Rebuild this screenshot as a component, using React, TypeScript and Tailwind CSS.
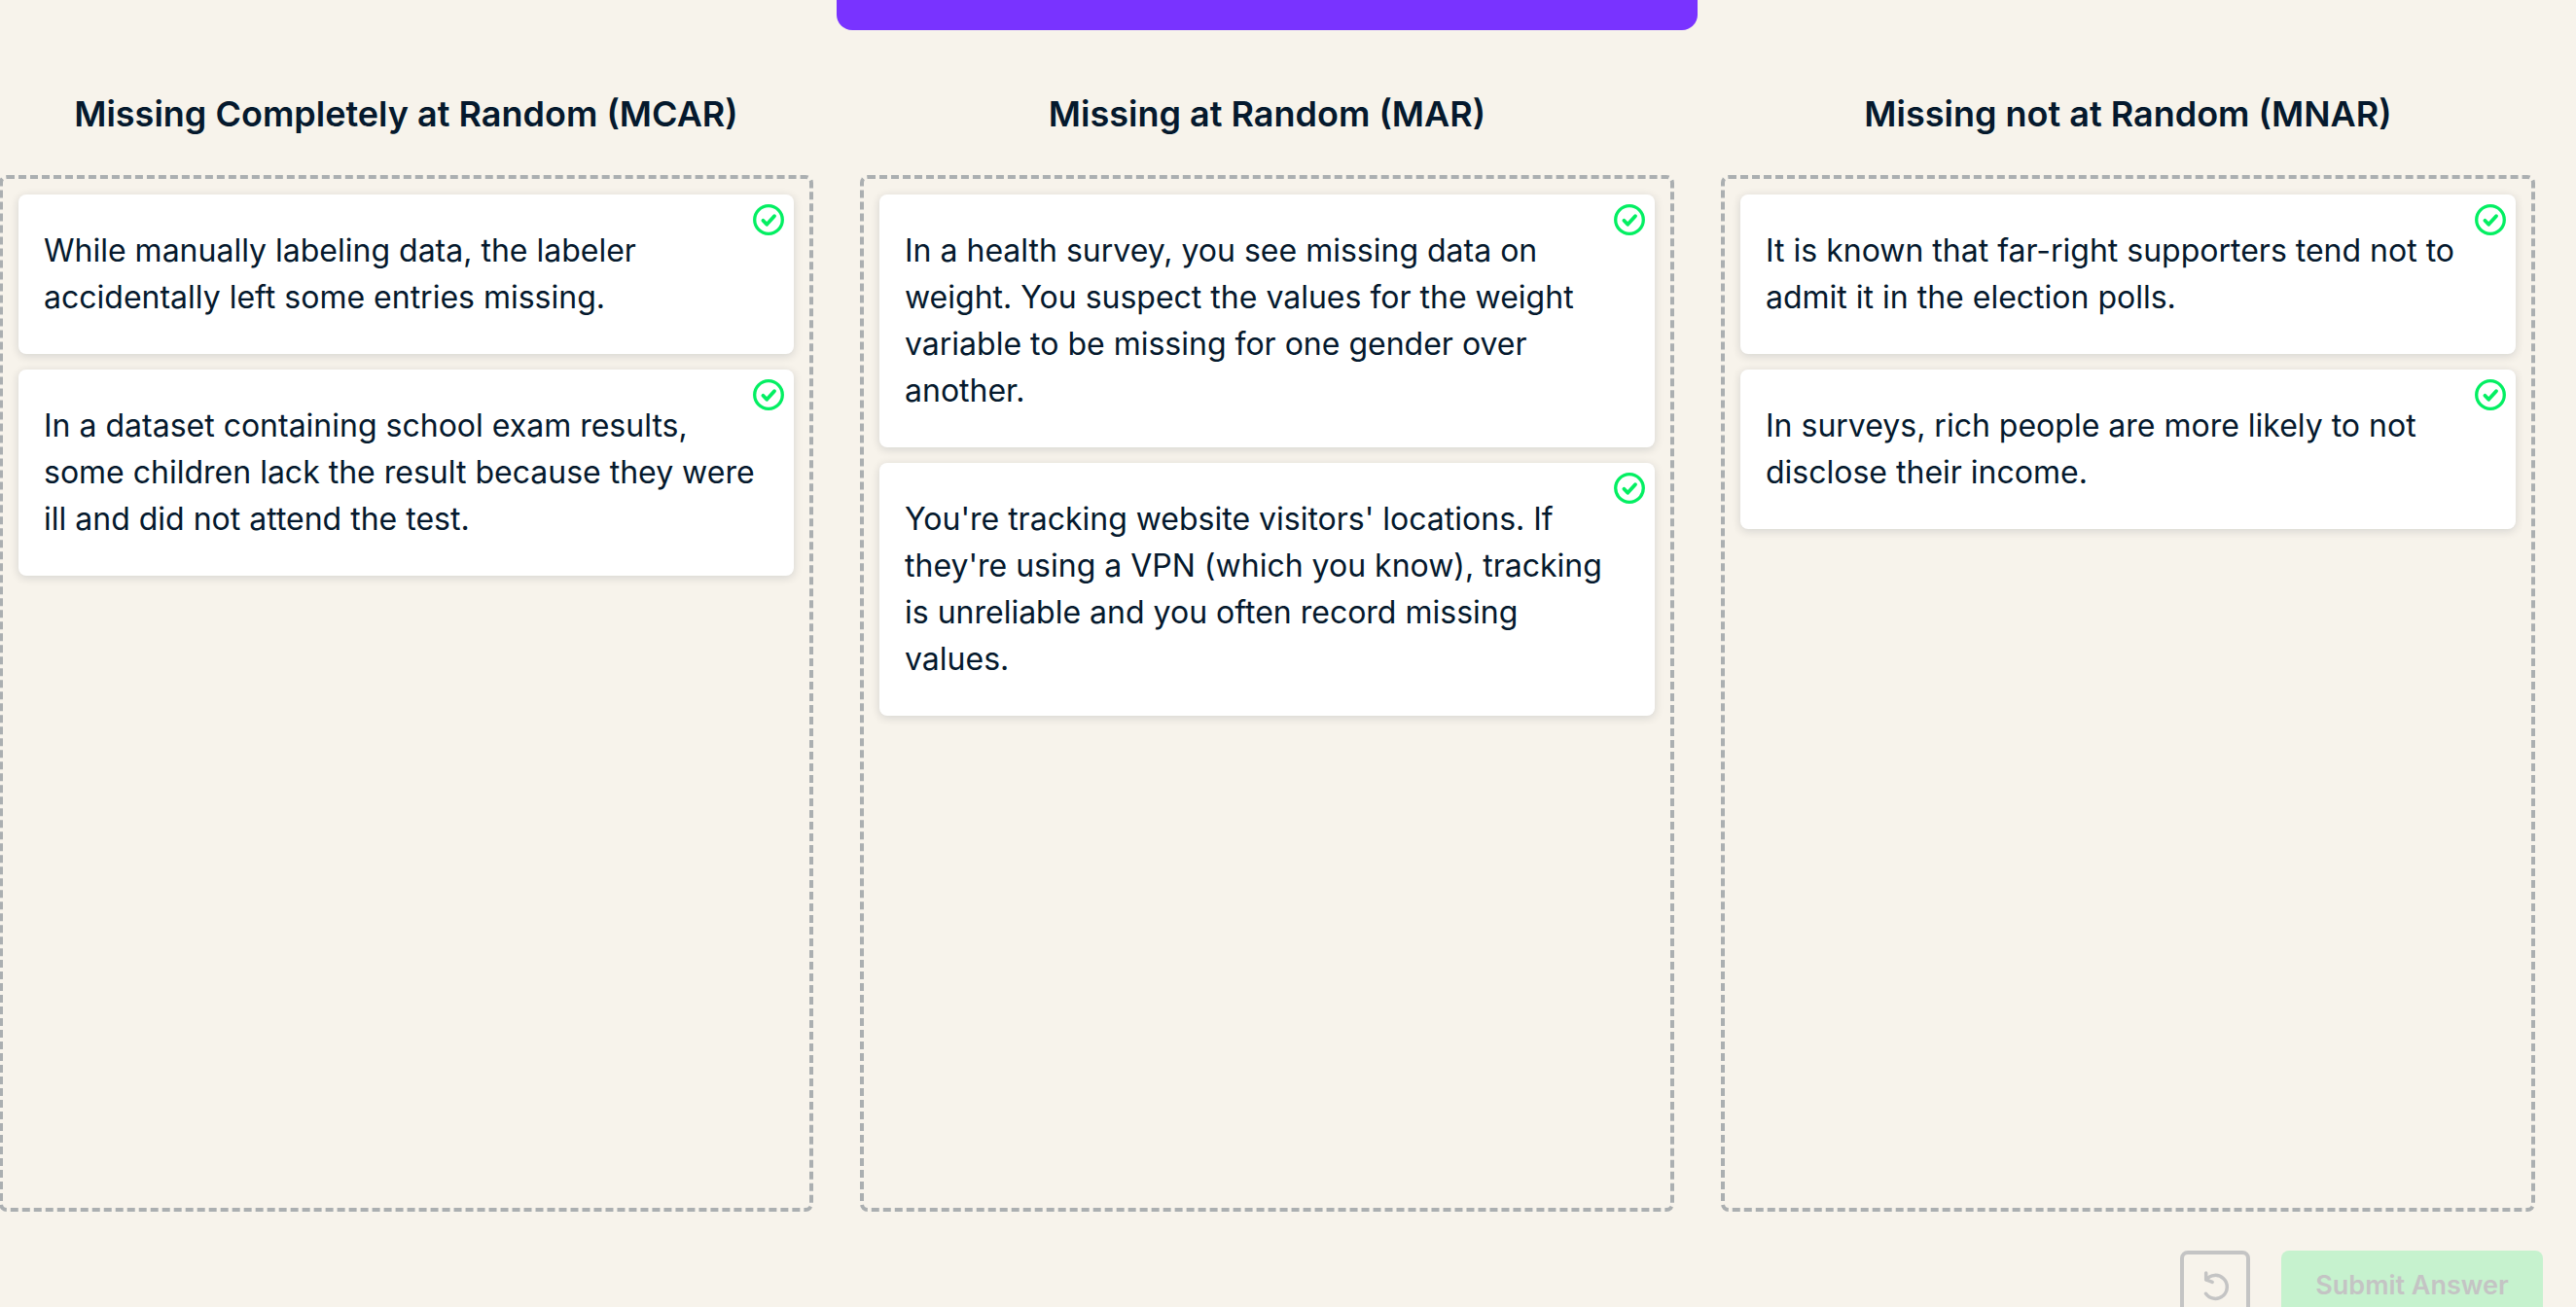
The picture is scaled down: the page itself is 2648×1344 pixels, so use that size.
const columns = [
  {
    title: "Missing Completely at Random (MCAR)",
    cards: [
      "While manually labeling data, the labeler accidentally left some entries missing.",
      "In a dataset containing school exam results, some children lack the result because they were ill and did not attend the test.",
    ],
  },
  {
    title: "Missing at Random (MAR)",
    cards: [
      "In a health survey, you see missing data on weight. You suspect the values for the weight variable to be missing for one gender over another.",
      "You're tracking website visitors' locations. If they're using a VPN (which you know), tracking is unreliable and you often record missing values.",
    ],
  },
  {
    title: "Missing not at Random (MNAR)",
    cards: [
      "It is known that far-right supporters tend not to admit it in the election polls.",
      "In surveys, rich people are more likely to not disclose their income.",
    ],
  },
];

function CorrectIcon() {
  return (
    <svg
      role="img"
      aria-label="Correct"
      viewBox="0 0 32 32"
      className="absolute top-2.5 right-2.5 size-8 text-[#03ef62]"
      fill="none"
      stroke="currentColor"
      strokeLinecap="round"
      strokeLinejoin="round"
    >
      <circle cx="16" cy="16" r="14.3" strokeWidth="3.3" />
      <path strokeWidth="3.8" d="M10.4 16.8l3.8 4L22 12.2" />
    </svg>
  );
}

function ResetIcon() {
  return (
    <svg
      aria-hidden="true"
      viewBox="0 0 36 36"
      className="size-9"
      fill="none"
      stroke="currentColor"
      strokeWidth="3.5"
      strokeLinecap="round"
      strokeLinejoin="round"
    >
      <path d="M8.5 26.3A12 12 0 1 0 8.9 11.9" />
      <path d="M8.7 5v6.8l6.5 2.6" />
    </svg>
  );
}

export default function App() {
  return (
    <main className="h-screen overflow-hidden bg-[#f7f3eb] font-['Inter',sans-serif] text-[#05192d]">
      <div className="-ml-px mr-[42px]">
        <div className="mx-auto h-[31px] w-[885px] max-w-full rounded-b-2xl bg-[#7933ff]" />
        <div className="grid grid-cols-3 gap-12 pt-[62px]">
          {columns.map((column) => (
            <section key={column.title} className="flex flex-col">
              <h2 className="text-center text-[36px] leading-[48px] font-semibold">{column.title}</h2>
              <ul className="mt-[39px] flex min-h-[1066px] flex-col gap-4 rounded-lg border-4 border-dashed border-[#abafb1] p-4">
                {column.cards.map((card) => (
                  <li
                    key={card}
                    className="relative rounded-lg bg-white py-[34px] pr-9 pl-[26px] text-[32px] leading-[48px] shadow-[0_2px_8px_1px_rgba(5,25,45,0.12)]"
                  >
                    {card}
                    <CorrectIcon />
                  </li>
                ))}
              </ul>
            </section>
          ))}
        </div>
      </div>
      <div className="mt-10 mr-[34px] flex justify-end gap-8">
        <button
          type="button"
          disabled
          aria-label="Reset"
          className="flex size-[72px] items-center justify-center rounded-lg border-4 border-[#c4c4c4] text-[#c4c4c4]"
        >
          <ResetIcon />
        </button>
        <button
          type="button"
          disabled
          className="h-[72px] w-[269px] rounded-lg bg-[#c6f2ce] text-[27px] font-semibold text-[#c4c4c4]"
        >
          Submit Answer
        </button>
      </div>
    </main>
  );
}
